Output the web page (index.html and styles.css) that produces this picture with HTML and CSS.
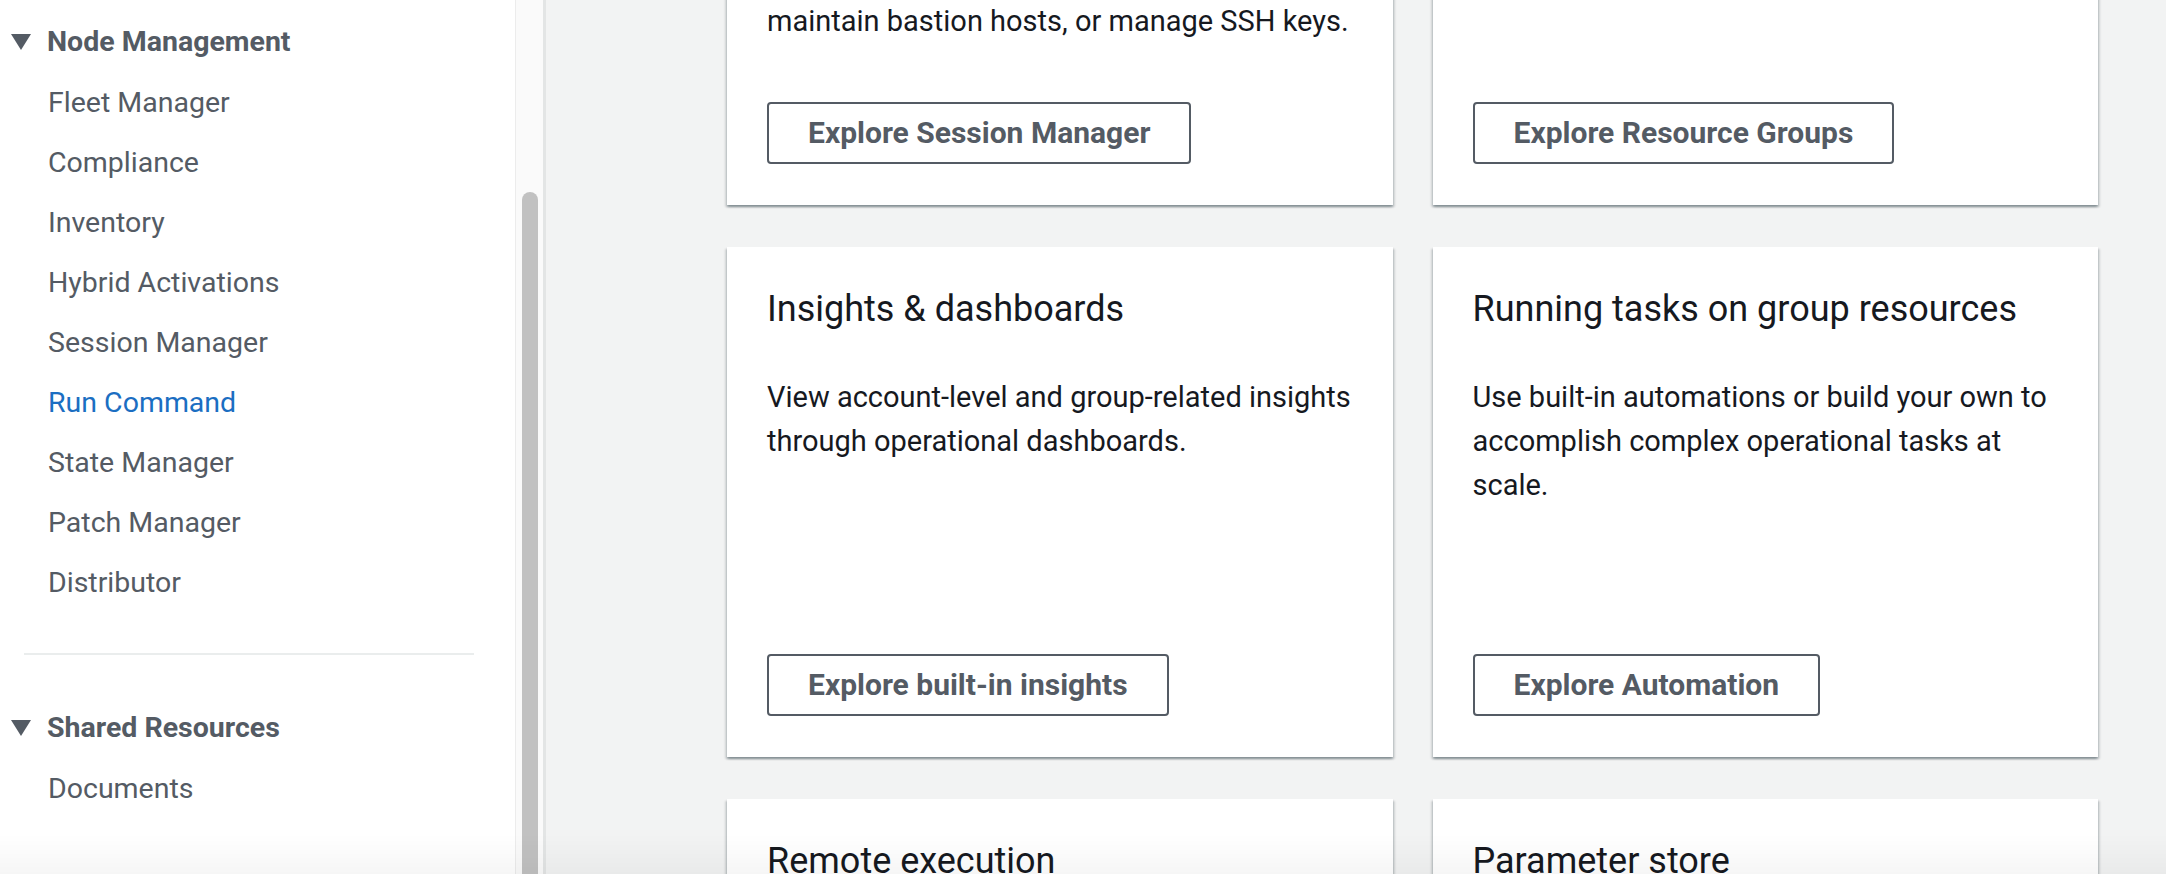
FILE: index.html
```html
<!DOCTYPE html>
<html lang="en">
<head>
<meta charset="utf-8">
<title>Systems Manager</title>
<link rel="stylesheet" href="styles.css">
</head>
<body>
<div class="app">
  <aside class="sidebar">
    <nav class="nav">
      <div class="nav-section">
        <div class="nav-heading"><span class="caret"></span>Node Management</div>
        <ul class="nav-list">
          <li class="nav-item">Fleet Manager</li>
          <li class="nav-item">Compliance</li>
          <li class="nav-item">Inventory</li>
          <li class="nav-item">Hybrid Activations</li>
          <li class="nav-item">Session Manager</li>
          <li class="nav-item active">Run Command</li>
          <li class="nav-item">State Manager</li>
          <li class="nav-item">Patch Manager</li>
          <li class="nav-item">Distributor</li>
        </ul>
      </div>
      <hr class="nav-divider">
      <div class="nav-section">
        <div class="nav-heading"><span class="caret"></span>Shared Resources</div>
        <ul class="nav-list">
          <li class="nav-item">Documents</li>
        </ul>
      </div>
    </nav>
  </aside>
  <div class="scroll-track"><div class="scroll-thumb"></div></div>
  <main class="main">
    <div class="cards">
      <section class="card">
        <h2 class="card-title">Secure remote management</h2>
        <p class="card-text">Manage your nodes through an interactive<br>one-click browser-based shell or through<br>the AWS CLI. Connect securely without<br>the need to open inbound ports,<br>maintain bastion hosts, or manage SSH keys.</p>
        <button class="btn">Explore Session Manager</button>
      </section>
      <section class="card">
        <h2 class="card-title">Application &amp; resource groups</h2>
        <p class="card-text">Group your AWS resources by application<br>and get a unified view of operational<br>data for each group.</p>
        <button class="btn">Explore Resource Groups</button>
      </section>
      <section class="card">
        <h2 class="card-title">Insights &amp; dashboards</h2>
        <p class="card-text">View account-level and group-related insights through operational dashboards.</p>
        <button class="btn">Explore built-in insights</button>
      </section>
      <section class="card">
        <h2 class="card-title">Running tasks on group resources</h2>
        <p class="card-text">Use built-in automations or build your own to accomplish complex operational tasks at scale.</p>
        <button class="btn">Explore Automation</button>
      </section>
      <section class="card">
        <h2 class="card-title">Remote execution</h2>
        <p class="card-text">Run commands across fleets of managed nodes at scale.</p>
        <button class="btn">Explore Run Command</button>
      </section>
      <section class="card">
        <h2 class="card-title">Parameter store</h2>
        <p class="card-text">Centrally store and manage configuration data and secrets.</p>
        <button class="btn">Explore Parameter Store</button>
      </section>
    </div>
  </main>
</div>
</body>
</html>
```
FILE: styles.css
```css
html, body {
  margin: 0;
  padding: 0;
  height: 874px;
  overflow: hidden;
}

body {
  font-family: Roboto, "Liberation Sans", Arial, sans-serif;
  color: #16191f;
  background: #f2f3f3;
}

body::after {
  content: "";
  position: fixed;
  left: 0;
  right: 0;
  bottom: 0;
  height: 40px;
  background: linear-gradient(to bottom, rgba(0, 0, 0, 0), rgba(0, 0, 0, 0.035));
  pointer-events: none;
}

.app {
  display: flex;
  height: 874px;
}

/* Sidebar */
.sidebar {
  width: 515px;
  flex: none;
  background: #ffffff;
  overflow: hidden;
}

.nav {
  padding-top: 11px;
}

.nav-heading {
  display: flex;
  align-items: center;
  padding: 9px 0;
  line-height: 44px;
  font-size: 28.5px;
  font-weight: 700;
  color: #545b64;
}

.caret {
  width: 0;
  height: 0;
  margin-left: 11px;
  margin-right: 16px;
  border-left: 10px solid transparent;
  border-right: 10px solid transparent;
  border-top: 16px solid #545b64;
}

.nav-list {
  list-style: none;
  margin: 0;
  padding: 0;
}

.nav-item {
  padding: 8px 0 8px 48px;
  line-height: 44px;
  font-size: 28.5px;
  color: #545b64;
}

.nav-item.active {
  color: #1b6ec2;
}

.nav-divider {
  border: 0;
  height: 2px;
  background: #eaeded;
  margin: 40px 41px 42px 24px;
}

/* Scrollbar */
.scroll-track {
  width: 28px;
  flex: none;
  background: #fafafa;
  border-left: 1px solid #ececec;
  display: flex;
  flex-direction: column;
  padding: 192px 5px 0 6px;
  box-sizing: border-box;
}

.scroll-thumb {
  flex: 1;
  width: 16px;
  background: #c1c1c1;
  border-radius: 8px 8px 0 0;
}

/* Main */
.main {
  flex: 1;
  min-width: 0;
  border-left: 3px solid #e3e5e5;
  padding: 0 68px 0 181px;
  overflow: hidden;
}

.cards {
  display: grid;
  grid-template-columns: 1fr 1fr;
  column-gap: 40px;
  row-gap: 42px;
  margin-top: -305px;
}

.card {
  background: #ffffff;
  min-height: 510px;
  box-sizing: border-box;
  padding: 40px 40px 41px;
  display: flex;
  flex-direction: column;
  align-items: flex-start;
  box-shadow: 0 2px 2px 0 rgba(0, 28, 36, 0.3), 2px 2px 2px 0 rgba(0, 28, 36, 0.12), -2px 2px 2px 0 rgba(0, 28, 36, 0.12);
}

.card-title {
  margin: 0 0 44px;
  font-size: 36px;
  line-height: 44px;
  font-weight: 400;
  color: #16191f;
}

.card-text {
  margin: 0 0 58px;
  font-size: 29px;
  line-height: 44px;
  color: #16191f;
}

.btn {
  margin-top: auto;
  height: 62px;
  padding: 0 39px;
  background: #ffffff;
  border: 2px solid #545b64;
  border-radius: 4px;
  font-family: inherit;
  font-size: 30px;
  font-weight: 700;
  color: #545b64;
  line-height: 58px;
}
```
